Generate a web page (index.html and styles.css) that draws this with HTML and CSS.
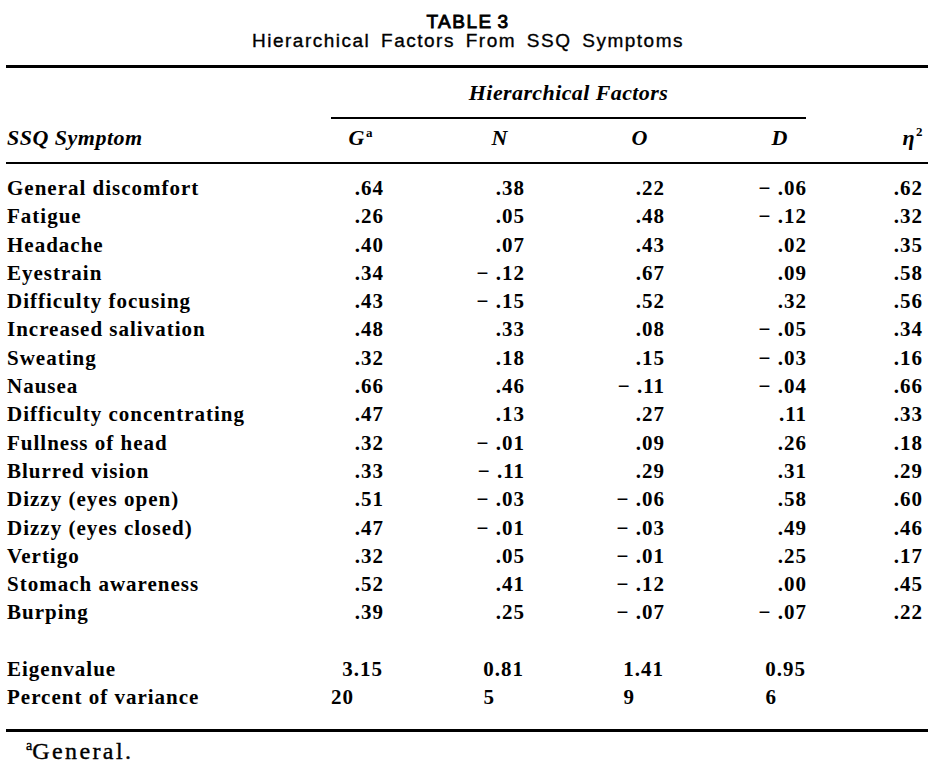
FILE: index.html
```html
<!DOCTYPE html>
<html lang="en">
<head>
<meta charset="utf-8">
<title>Table 3 – Hierarchical Factors From SSQ Symptoms</title>
<link rel="stylesheet" href="styles.css">
</head>
<body>
<div class="page">
  <header class="title">
    <div class="title-num">TABLE 3</div>
    <div class="title-name">Hierarchical Factors From SSQ Symptoms</div>
  </header>
  <div class="table">
    <div class="spanner-row">
      <div class="spanner">Hierarchical Factors</div>
    </div>
    <div class="row head-row">
      <div class="label">SSQ Symptom</div>
      <div class="num h-g">G<sup class="sup">a</sup></div>
      <div class="num h-n">N</div>
      <div class="num h-o">O</div>
      <div class="num h-d">D</div>
      <div class="num h-e">η<sup class="sup2">2</sup></div>
    </div>
    <div class="body">
      <div class="row"><div class="label">General discomfort</div><div class="num">.64</div><div class="num">.38</div><div class="num">.22</div><div class="num">− .06</div><div class="num">.62</div></div>
      <div class="row"><div class="label">Fatigue</div><div class="num">.26</div><div class="num">.05</div><div class="num">.48</div><div class="num">− .12</div><div class="num">.32</div></div>
      <div class="row"><div class="label">Headache</div><div class="num">.40</div><div class="num">.07</div><div class="num">.43</div><div class="num">.02</div><div class="num">.35</div></div>
      <div class="row"><div class="label">Eyestrain</div><div class="num">.34</div><div class="num">− .12</div><div class="num">.67</div><div class="num">.09</div><div class="num">.58</div></div>
      <div class="row"><div class="label">Difficulty focusing</div><div class="num">.43</div><div class="num">− .15</div><div class="num">.52</div><div class="num">.32</div><div class="num">.56</div></div>
      <div class="row"><div class="label">Increased salivation</div><div class="num">.48</div><div class="num">.33</div><div class="num">.08</div><div class="num">− .05</div><div class="num">.34</div></div>
      <div class="row"><div class="label">Sweating</div><div class="num">.32</div><div class="num">.18</div><div class="num">.15</div><div class="num">− .03</div><div class="num">.16</div></div>
      <div class="row"><div class="label">Nausea</div><div class="num">.66</div><div class="num">.46</div><div class="num">− .11</div><div class="num">− .04</div><div class="num">.66</div></div>
      <div class="row"><div class="label">Difficulty concentrating</div><div class="num">.47</div><div class="num">.13</div><div class="num">.27</div><div class="num">.11</div><div class="num">.33</div></div>
      <div class="row"><div class="label">Fullness of head</div><div class="num">.32</div><div class="num">− .01</div><div class="num">.09</div><div class="num">.26</div><div class="num">.18</div></div>
      <div class="row"><div class="label">Blurred vision</div><div class="num">.33</div><div class="num">− .11</div><div class="num">.29</div><div class="num">.31</div><div class="num">.29</div></div>
      <div class="row"><div class="label">Dizzy (eyes open)</div><div class="num">.51</div><div class="num">− .03</div><div class="num">− .06</div><div class="num">.58</div><div class="num">.60</div></div>
      <div class="row"><div class="label">Dizzy (eyes closed)</div><div class="num">.47</div><div class="num">− .01</div><div class="num">− .03</div><div class="num">.49</div><div class="num">.46</div></div>
      <div class="row"><div class="label">Vertigo</div><div class="num">.32</div><div class="num">.05</div><div class="num">− .01</div><div class="num">.25</div><div class="num">.17</div></div>
      <div class="row"><div class="label">Stomach awareness</div><div class="num">.52</div><div class="num">.41</div><div class="num">− .12</div><div class="num">.00</div><div class="num">.45</div></div>
      <div class="row"><div class="label">Burping</div><div class="num">.39</div><div class="num">.25</div><div class="num">− .07</div><div class="num">− .07</div><div class="num">.22</div></div>
      <div class="spacer"></div>
      <div class="row eigen"><div class="label">Eigenvalue</div><div class="num">3.15</div><div class="num">0.81</div><div class="num">1.41</div><div class="num">0.95</div><div class="num"></div></div>
      <div class="row pct"><div class="label">Percent of variance</div><div class="num">20</div><div class="num">5</div><div class="num">9</div><div class="num">6</div><div class="num"></div></div>
    </div>
  </div>
  <p class="footnote"><sup class="fn-sup">a</sup>General.</p>
</div>
</body>
</html>
```

FILE: styles.css
```css
html, body {
  margin: 0;
  padding: 0;
  background: #fff;
  overflow: hidden;
}

.page {
  margin-left: 6px;
  width: 922px;
  font-family: "Liberation Serif", "Times New Roman", serif;
  color: #000;
}

.title {
  font-family: "Liberation Sans", Arial, sans-serif;
  font-size: 19px;
  line-height: 19px;
  letter-spacing: 1.5px;
  text-align: center;
  padding-top: 12px;
  padding-left: 2px;
  -webkit-text-stroke: 0.35px #000;
}

.title-num {
  -webkit-text-stroke: 0.9px #000;
  word-spacing: -2px;
}

.title-name {
  word-spacing: 4px;
}

.table {
  margin-top: 15px;
  border-top: 3px solid #000;
  border-bottom: 3px solid #000;
}

.row,
.spanner-row {
  display: grid;
  grid-template-columns: 300px 77px 141px 140px 142px 116px;
}

.spanner-row {
  padding-top: 11px;
}

.spanner {
  grid-column: 2 / 6;
  margin-left: 25px;
  border-bottom: 2px solid #000;
  padding-bottom: 10px;
  font-size: 22px;
  line-height: 28px;
  font-weight: bold;
  font-style: italic;
  letter-spacing: 0.4px;
  text-align: center;
}

.head-row {
  padding-top: 5px;
  padding-bottom: 10px;
  border-bottom: 2px solid #000;
  font-size: 22px;
  line-height: 28px;
  font-weight: bold;
  font-style: italic;
  letter-spacing: 0.5px;
}

.head-row .label {
  padding-left: 1px;
}

.sup {
  font-size: 13px;
  font-style: normal;
  vertical-align: 8px;
  line-height: 0;
  margin-left: 1px;
}

.sup2 {
  font-size: 13px;
  font-style: normal;
  vertical-align: 9px;
  line-height: 0;
  margin-left: 1px;
}

.h-g { padding-right: 11px; }
.h-n { padding-right: 17px; }
.h-o { padding-right: 17px; }
.h-d { padding-right: 19px; }
.h-e { padding-right: 0; }

.body {
  padding-top: 10px;
  padding-bottom: 17px;
  font-size: 21px;
  line-height: 28.3px;
  font-weight: bold;
  letter-spacing: 1px;
}

.label {
  padding-left: 1px;
  white-space: nowrap;
}

.num {
  text-align: right;
  white-space: nowrap;
  margin-right: -1px;
}

.spacer {
  height: 28.3px;
}

.eigen .num {
  padding-right: 1px;
}

.pct .num {
  padding-right: 30px;
}

.footnote {
  margin: 0;
  padding-top: 8px;
  padding-left: 20px;
  font-size: 24px;
  line-height: 23px;
  letter-spacing: 2.4px;
  -webkit-text-stroke: 0.4px #000;
}

.fn-sup {
  font-size: 14px;
  vertical-align: 9px;
  line-height: 0;
  letter-spacing: 0;
}
```
